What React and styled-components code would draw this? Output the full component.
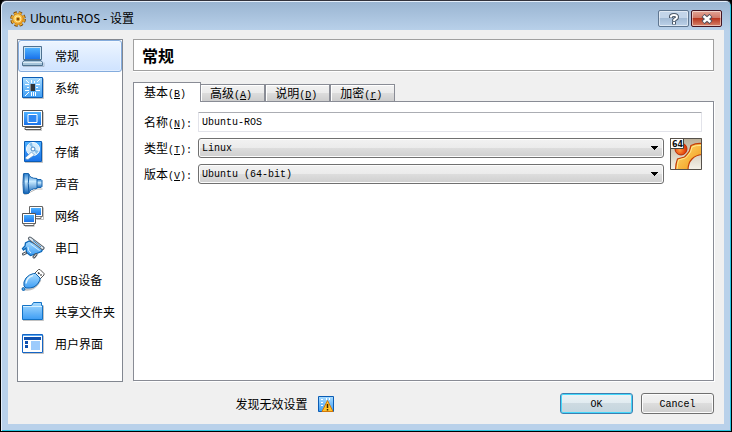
import React from 'react'
import styled, { createGlobalStyle, css } from 'styled-components'

const sections = [
    { name: '常规', icon: LaptopIcon },
    { name: '系统', icon: ChipIcon },
    { name: '显示', icon: DisplayIcon },
    { name: '存储', icon: DiskIcon },
    { name: '声音', icon: SpeakerIcon },
    { name: '网络', icon: NetworkIcon },
    { name: '串口', icon: SerialIcon },
    { name: 'USB设备', icon: UsbIcon },
    { name: '共享文件夹', icon: FolderIcon },
    { name: '用户界面', icon: LayoutIcon },
]

const tabs = [
    { name: '基本', letter: 'B' },
    { name: '高级', letter: 'A' },
    { name: '说明', letter: 'D' },
    { name: '加密', letter: 'r' },
]

function App() {
    const [section, setSection] = React.useState('常规')
    const [tab, setTab] = React.useState('基本')

    return (
        <Frame>
            <Global />
            <Gradients />
            <TitleBar>
                <GearIcon />
                <Title>Ubuntu-ROS - 设置</Title>
                <HelpButton aria-label="Help"><HelpIcon /></HelpButton>
                <CloseButton aria-label="Close"><CloseIcon /></CloseButton>
            </TitleBar>

            <Content>
                <Main>
                    <Sidebar>
                        {sections.map(({ name, icon: Icon }) => (
                            <SidebarItem key={name} $active={name === section} onClick={() => setSection(name)}>
                                <Icon />
                                <SidebarText>{name}</SidebarText>
                            </SidebarItem>
                        ))}
                    </Sidebar>

                    <Settings>
                        <Heading>{section}</Heading>
                        <TabRow role="tablist">
                            {tabs.map(({ name, letter }) => (
                                <Tab
                                    key={name}
                                    role="tab"
                                    aria-selected={name === tab}
                                    $active={name === tab}
                                    onClick={() => setTab(name)}
                                >
                                    {name}<Mono>(<u>{letter}</u>)</Mono>
                                </Tab>
                            ))}
                        </TabRow>
                        <Pane>
                            <Label htmlFor="name">名称<Mono>(<u>N</u>):</Mono></Label>
                            <Input id="name" type="text" defaultValue="Ubuntu-ROS" />

                            <Label htmlFor="type">类型<Mono>(<u>T</u>):</Mono></Label>
                            <SelectBox>
                                <Select id="type"><option>Linux</option></Select>
                                <Arrow />
                            </SelectBox>
                            <SystemBox><UbuntuIcon /></SystemBox>

                            <Label htmlFor="version">版本<Mono>(<u>V</u>):</Mono></Label>
                            <SelectBox>
                                <Select id="version"><option>Ubuntu (64-bit)</option></Select>
                                <Arrow />
                            </SelectBox>
                        </Pane>
                    </Settings>
                </Main>

                <Footer>
                    <Warning>
                        发现无效设置
                        <WarningIcon />
                    </Warning>
                    <Button $primary>OK</Button>
                    <Button>Cancel</Button>
                </Footer>
            </Content>
        </Frame>
    )
}

function Arrow() {
    return (
        <ArrowSvg width="7" height="4" viewBox="0 0 7 4" shapeRendering="crispEdges">
            <path d="M0 0h7v1h-1v1h-1v1h-1v1h-1v-1h-1v-1h-1v-1h-1z" />
        </ArrowSvg>
    )
}

function Gradients() {
    return (
        <HiddenSvg aria-hidden="true">
            <defs>
                <linearGradient id="screen" x1="0" y1="0" x2="0" y2="1">
                    <stop offset="0" stopColor="#4db1ff" />
                    <stop offset="1" stopColor="#1972ea" />
                </linearGradient>
                <linearGradient id="sky" x1="0" y1="0" x2="0" y2="1">
                    <stop offset="0" stopColor="#a9dcff" />
                    <stop offset="1" stopColor="#3d9df4" />
                </linearGradient>
                <linearGradient id="cone" x1="0" y1="0" x2="0" y2="1">
                    <stop offset="0" stopColor="#2a7fd0" />
                    <stop offset=".4" stopColor="#c8eaff" />
                    <stop offset="1" stopColor="#1263b8" />
                </linearGradient>
                <linearGradient id="gold" x1="0" y1="0" x2="1" y2="1">
                    <stop offset="0" stopColor="#ffe27a" />
                    <stop offset="1" stopColor="#f0920f" />
                </linearGradient>
                <linearGradient id="paper" x1="0" y1="0" x2="0" y2="1">
                    <stop offset="0" stopColor="#b9ae98" />
                    <stop offset="1" stopColor="#f6f3ea" />
                </linearGradient>
                <radialGradient id="ball" cx=".4" cy=".6">
                    <stop offset="0" stopColor="#ff9a3d" />
                    <stop offset="1" stopColor="#df3a08" />
                </radialGradient>
            </defs>
        </HiddenSvg>
    )
}

function LaptopIcon() {
    return (
        <Icon>
            <path d="M2.5 2.5h18v13h-18z" fill="#c9e3f5" stroke="#4e7190" />
            <path d="M4 4h15v11h-15z" fill="url(#screen)" />
            <path d="M3 16.5h17l1.500 2v3h-20v-3z" fill="#a5c4da" stroke="#4e7190" />
            <path d="M2 18.500h19" stroke="#dceaf5" />
            <path d="M2 22.500h21v-4" fill="none" stroke="#8a98a6" opacity=".5" />
        </Icon>
    )
}

function ChipIcon() {
    return (
        <Icon>
            <path d="M2 22.500h20.500v-20" fill="none" stroke="#999" opacity=".6" />
            <path d="M1.500 1.500h20v20h-20z" fill="url(#sky)" stroke="#0b5cb4" />
            <path d="M9 8h5v7h-5z" fill="#303438" />
            <path d="M9.500 8v7" stroke="#868d93" />
            <path d="M4 8.500h4M6 11.500h2M4 14.500h4M15 8.500h4M15 11.500h2M15 14.500h4M10.500 4v3M13.500 5v2M10.500 16v4M12.500 16v4M14.500 16v4M16 6l3-3M4 20l4-4M5 4l3 3" stroke="#fff" />
        </Icon>
    )
}

function DisplayIcon() {
    return (
        <Icon>
            <path d="M4 19.500h16v2h-16z" fill="#fff" stroke="#5b5b5b" />
            <path d="M1.500 2.500h20v16h-20z" fill="#fff" stroke="#555" />
            <path d="M3 4h17v13h-17z" fill="url(#screen)" />
            <path d="M7 6.500h9v8h-9z" fill="#2d87f2" stroke="#fff" />
            <path d="M22.500 4v15M5 22.500h16" stroke="#aaa" opacity=".6" />
        </Icon>
    )
}

function DiskIcon() {
    return (
        <Icon>
            <path d="M4 22.500h17.500v-20" fill="none" stroke="#999" opacity=".6" />
            <path d="M3.500 1.500h17v20h-17z" fill="url(#screen)" stroke="#0b5cb4" />
            <circle cx="12" cy="9" r="6.500" fill="#d3ebfc" stroke="#fff" />
            <path d="M12 9l-4-5 3-1.500z M12 9l5.500 2-2 3z" fill="#86bde9" />
            <circle cx="12" cy="9" r="2" fill="#fff" stroke="#4485c6" />
            <path d="M10.500 12l3 3-6.500 4.500q-3 .5-2.500-2z" fill="#fff" stroke="#5391ca" strokeWidth=".7" />
        </Icon>
    )
}

function SpeakerIcon() {
    return (
        <Icon>
            <path d="M3 22q1 1 3 0L9.500 20l6-3h6" fill="none" stroke="#888" opacity=".6" />
            <path d="M15 7.500h5l1 1v6l-1 1h-5z" fill="url(#cone)" stroke="#1764ae" />
            <path d="M3 1.500h4.500q1 5 8.500 5v10q-7 0-8.500 5h-4.500z" fill="url(#cone)" stroke="#1764ae" />
            <path d="M2.500 1.500q-1 10 0 20M8 2q-1.500 10 0 19" fill="none" stroke="#115aa5" />
        </Icon>
    )
}

function NetworkIcon() {
    return (
        <Icon>
            <path d="M22.500 3.500v12h-7M4 22.500h9.500" fill="none" stroke="#aaa" opacity=".7" />
            <path d="M8.500 2.500h13v10h-13z" fill="#fff" stroke="#666" />
            <path d="M10 4h10v7h-10z" fill="url(#screen)" />
            <path d="M11 12.500h9v2h-9z" fill="#fff" stroke="#777" />
            <path d="M1.500 9.500h13v10h-13z" fill="#fff" stroke="#555" />
            <path d="M3 11h10v7h-10z" fill="url(#screen)" />
            <path d="M3 19.500h10v2h-10z" fill="#fff" stroke="#666" />
        </Icon>
    )
}

function SerialIcon() {
    return (
        <Icon>
            <path d="M8 5L4.500 7 4 10 1.500 12.500l1 1.500L5 12l.5 4.500 4 3L14.500 18l6-2.500 2-4z" fill="url(#sky)" stroke="#0965b6" strokeWidth="1.300" />
            <path d="M9.500 8l9 6.500M7 11q0 4 3 6" stroke="#d5f0ff" />
            <path d="M9 2.500l12.500 9.500" stroke="#59626b" strokeWidth="4" strokeLinecap="round" />
            <path d="M9 2.500l12.500 9.500" stroke="#e3ecf3" strokeWidth="2" strokeLinecap="round" />
            <path d="M12 4.500l8 6.500" stroke="#2e82ca" />
            <path d="M2.500 18l2-1M13 21l2-2.500" stroke="#4d5660" strokeWidth="3" strokeLinecap="round" />
            <path d="M2.500 18l2-1M13 21l2-2.500" stroke="#eee" strokeLinecap="round" />
        </Icon>
    )
}

function UsbIcon() {
    return (
        <Icon>
            <path d="M4 21.500q8 1 12.500-5l3-4.500" fill="none" stroke="#777" strokeWidth="2" opacity=".45" />
            <path d="M13.500 5.500l4-4h1.500l4 4v1.500l-4 4z" fill="#fff" stroke="#555" />
            <path d="M17 4.500l1.500 1.500M19.500 6.500l1 1" stroke="#333" strokeWidth="1.500" />
            <path d="M12.500 5.500h2l4.500 4.500v2q-2 5-6 7-4 1.500-8 1l-2-2q-1-4 2-8 3-3.500 7.500-4.500z" fill="url(#sky)" stroke="#0c61ad" />
            <path d="M12 7.500q-6 1.500-7 8" fill="none" stroke="#e0f4ff" strokeWidth="1.500" />
            <circle cx="2.500" cy="21" r="1.500" fill="#4da4ea" stroke="#0c61ad" />
        </Icon>
    )
}

function FolderIcon() {
    return (
        <Icon>
            <path d="M2 20.500h20.500v-15" fill="none" stroke="#999" opacity=".6" />
            <path d="M1.500 5.500h9l2-3h8v3h1v14h-20z" fill="url(#sky)" stroke="#1373c6" />
            <path d="M2 6.500h19" stroke="#d6f0ff" />
        </Icon>
    )
}

function LayoutIcon() {
    return (
        <Icon>
            <path d="M2 21.500h20.500v-18" fill="none" stroke="#999" opacity=".6" />
            <path d="M1.500 2.500h20v18h-20z" fill="#fff" stroke="#1565c5" />
            <path d="M2 3.500h19" stroke="#58aaf5" />
            <path d="M3 5h17v3h-17zM4 9h3v3h-3zM4 13h3v3h-3z" fill="#0e4fae" />
            <path d="M10 9h9v9h-9z" fill="#9dcbfc" />
        </Icon>
    )
}

function GearIcon() {
    return (
        <svg width="16" height="16" viewBox="0 0 16 16">
            <circle cx="8" cy="8" r="6.300" fill="none" stroke="#704008" strokeWidth="3" strokeDasharray="3.100 1.848" />
            <circle cx="8" cy="8" r="6" fill="none" stroke="#f2b233" strokeWidth="2" strokeDasharray="2.600 2.112" strokeDashoffset="-.2" />
            <circle cx="8" cy="8" r="5.300" fill="url(#gold)" stroke="#d08a1a" />
            <circle cx="8" cy="8" r="3" fill="#f9c445" stroke="#ffe89a" />
            <circle cx="8" cy="8" r="1.500" fill="#8b4c05" />
        </svg>
    )
}

function HelpIcon() {
    return (
        <svg width="12" height="12" viewBox="0 0 12 12" fill="none">
            <path d="M3 5V3.500q0-1.500 3-1.500t3 2q0 1.500-1.500 2T6 8.200M6 8.500v3" stroke="#4b5868" strokeWidth="4" />
            <path d="M3 4.500V3.500q0-1.500 3-1.500t3 2q0 1.500-1.500 2T6 8M6 9v2" stroke="#fff" strokeWidth="2" />
        </svg>
    )
}

function CloseIcon() {
    return (
        <svg width="12" height="10" viewBox="0 0 12 10" fill="none">
            <path d="M2 1.500l8 7M10 1.500l-8 7" stroke="#50515e" strokeWidth="4.500" />
            <path d="M2.500 2l7 6M9.500 2l-7 6" stroke="#fff" strokeWidth="2.500" />
        </svg>
    )
}

function UbuntuIcon() {
    return (
        <svg width="32" height="32" viewBox="0 0 32 32" role="img" aria-label="Ubuntu 64">
            <path d="M0 0h32v32h-32z" fill="url(#paper)" />
            <circle cx="11" cy="11" r="6" fill="url(#ball)" stroke="#b92c04" />
            <path d="M32 5.500q-6-.5-11 2l-1.500 5.500q-2 3-5 6l-7 2q-2 5-2 11h12.500q0-7 4-11 4-4 10-4.500z" fill="url(#gold)" stroke="#c33c05" strokeWidth="1.200" />
            <path d="M31 7.500q-5-.5-9 1.500l-1.500 5q-2 3-5 6l-7 2q-1 4-1.500 9" fill="none" stroke="#ffe88d" />
            <path d="M.5 .5h13v10h-13z" fill="#fff" stroke="#44443c" />
            <BadgeText x="2" y="9">64</BadgeText>
            <path d="M.5 .5h31v31h-31z" fill="none" stroke="#55504a" />
        </svg>
    )
}

function WarningIcon() {
    return (
        <svg width="16" height="16" viewBox="0 0 16 16">
            <path d="M.5 .5h15v15h-15z" fill="url(#sky)" stroke="#0b5cb4" />
            <path d="M3 3.500h2M3 6.500h2M3 9.500h2M8.500 2v2M11.500 2v2" stroke="#fff" />
            <path d="M9.500 4.500l5.500 11h-11z" fill="#ffc42c" stroke="#d3790a" strokeLinejoin="round" />
            <path d="M9.500 8v4M9.500 13v1.500" stroke="#3c2200" strokeWidth="1.500" />
        </svg>
    )
}

const Global = createGlobalStyle`
* { box-sizing: border-box; }
body {
margin: 0;
background: #000;
}
button, input, select { font: inherit; color: inherit; margin: 0; }
`

const ui = '"Noto Sans", "Noto Sans CJK SC", sans-serif'
const song = '"Noto Sans CJK SC", sans-serif'
const mono = '"Liberation Mono", "Noto Sans CJK SC", monospace'

const Frame = styled.div`
display: flex;
flex-direction: column;
min-height: 100vh;
padding: 0 7px 7px 6px;
border: 1px solid #000;
border-top-color: #32323c;
border-radius: 6px 6px 0 0;
background: linear-gradient(#99b4d1, #b9d1ea 30px);
box-shadow: inset 1px 1px #e4eefa, inset -1px -1px #29c5e0;
font: 12px/16px ${song};
color: #000;
`

const TitleBar = styled.header`
display: flex;
align-items: center;
height: 29px;
padding: 6px 2px 0 3px;
`

const Title = styled.h1`
flex: 1;
margin: 0 0 0 4px;
font: 12px/16px ${ui};
`

const CaptionButton = styled.button`
display: flex;
align-items: center;
justify-content: center;
width: 31px;
height: 17px;
padding: 0;
margin-left: 2px;
border: 1px solid #5f7690;
border-radius: 2px;
box-shadow: inset 0 0 0 1px rgba(255, 255, 255, .5);
`

const HelpButton = styled(CaptionButton)`
background: linear-gradient(#c3d5e9 50%, #a3bbd5 50%, #bcd1e8);
`

const CloseButton = styled(CaptionButton)`
border-color: #431422;
background: linear-gradient(#e2a596, #cf7463 50%, #b8361f 50%, #d6836b);
`

const Content = styled.main`
display: flex;
flex-direction: column;
flex: 1;
margin-left: 1px;
padding: 9px 10px 10px 9px;
background: #f0f0f0;
`

const Main = styled.div`
display: flex;
flex: 1;
gap: 10px;
`

const Sidebar = styled.nav`
width: 106px;
border: 1px solid #828790;
background: #fff;
`

const SidebarItem = styled.button`
display: flex;
align-items: center;
gap: 10px;
width: 100%;
height: 32px;
padding: 0 0 0 2px;
border: 1px solid transparent;
border-radius: 3px;
background: none;
font: 12px/16px ${ui};
white-space: nowrap;
${({ $active }) => $active && css`
border-color: #84acdd;
background: linear-gradient(#edf5ff, #cfe3ff);
box-shadow: inset 0 0 0 1px rgba(255, 255, 255, .4);
`}
`

const SidebarText = styled.span`
padding-top: 2px;
`

const Icon = styled.svg.attrs({ viewBox: '0 0 24 24', fill: 'none', 'aria-hidden': true })`
flex: none;
width: 24px;
height: 24px;
`

const Settings = styled.section`
display: flex;
flex-direction: column;
flex: 1;
min-width: 0;
padding-bottom: 1px;
`

const Heading = styled.h2`
margin: 0 0 11px;
padding: 7px 8px;
border: 1px solid #a0a0a0;
background: #fff;
box-shadow: 0 1px #fff;
font-size: 16px;
line-height: 16px;
`

const TabRow = styled.div`
display: flex;
align-items: flex-end;
position: relative;
height: 20px;
margin-bottom: -1px;
`

const Tab = styled.button`
height: 18px;
padding: 0 12px 0 9px;
border: 1px solid #898c95;
background: linear-gradient(#f2f2f2, #ebebeb 50%, #dddddd 50%, #cdcdcd);
box-shadow: inset 1px 1px #fff;
line-height: 16px;
white-space: nowrap;
${({ $active }) => $active && css`
height: 20px;
margin-right: -1px;
padding: 0 14px 0 10px;
border-bottom: 0;
background: #fff;
line-height: 18px;
`}
`

const Mono = styled.span`
font-family: ${mono};
font-size: 10px;
`

const Pane = styled.div`
display: grid;
grid-template-columns: 48px minmax(0, 1fr) 32px;
grid-auto-rows: 20px;
gap: 6px;
flex: 1;
padding: 10px 11px 10px 10px;
border: 1px solid #898c95;
background: #fff;
box-shadow: 1px 1px #fff;
`

const Label = styled.label`
grid-column: 1;
line-height: 20px;
white-space: nowrap;
`

const Input = styled.input`
grid-column: 2 / 4;
width: 100%;
padding: 2px 3px 0;
border: 1px solid #e2e3ea;
border-top-color: #abadb3;
border-radius: 1px;
font: 10px/16px ${mono};
outline: none;
`

const SelectBox = styled.div`
grid-column: 2;
position: relative;
`

const Select = styled.select`
display: block;
width: 100%;
height: 20px;
padding: 2px 20px 0 3px;
appearance: none;
border: 1px solid #707070;
border-radius: 3px;
background: linear-gradient(#f2f2f2, #ebebeb 50%, #dddddd 50%, #cfcfcf);
box-shadow: inset 0 0 0 1px #fcfcfc;
font: 10px/16px ${mono};
`

const ArrowSvg = styled.svg`
position: absolute;
top: 8px;
right: 6px;
pointer-events: none;
`

const SystemBox = styled.div`
grid-row: 2 / 4;
grid-column: 3;
`

const Footer = styled.footer`
display: flex;
align-items: center;
gap: 8px;
margin-top: 11px;
`

const Warning = styled.div`
display: flex;
align-items: center;
justify-content: center;
gap: 10px;
flex: 1;
`

const Button = styled.button`
width: 73px;
height: 21px;
padding: 2px 0 0;
border: 1px solid #707070;
border-radius: 3px;
background: linear-gradient(#f2f2f2, #ebebeb 50%, #dddddd 50%, #cfcfcf);
box-shadow: inset 0 0 0 1px #fcfcfc;
font: 10px/16px ${mono};
${({ $primary }) => $primary && css`
border-color: #3c7fb1;
background: linear-gradient(#edf2f5, #e0ebf0 50%, #cddae1 50%, #c4d5de);
box-shadow: inset 0 0 0 1px #45d8fb;
`}
`

const HiddenSvg = styled.svg`
position: absolute;
width: 0;
height: 0;
`

const BadgeText = styled.text`
font: bold 8px "DejaVu Sans", sans-serif;
fill: #111;
`

export default App
